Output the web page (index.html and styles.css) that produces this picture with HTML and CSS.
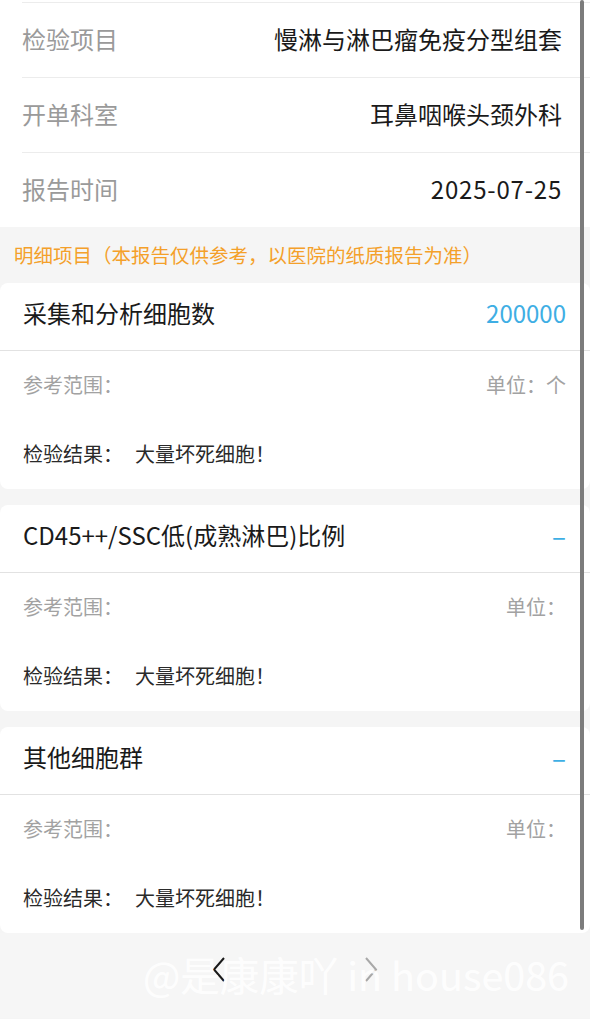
FILE: index.html
```html
<!DOCTYPE html>
<html lang="zh-CN">
<head>
<meta charset="utf-8">
<title>检验报告</title>
<link rel="stylesheet" href="styles.css">
</head>
<body>
<div class="page">
  <section class="info">
    <div class="info-row"><span class="info-label">检验项目</span><span class="info-value">慢淋与淋巴瘤免疫分型组套</span></div>
    <div class="info-row"><span class="info-label">开单科室</span><span class="info-value">耳鼻咽喉头颈外科</span></div>
    <div class="info-row"><span class="info-label">报告时间</span><span class="info-value date">2025-07-25</span></div>
  </section>
  <div class="notice">明细项目（本报告仅供参考，以医院的纸质报告为准）</div>
  <div class="cards">
    <div class="card">
      <div class="card-head"><span class="card-title">采集和分析细胞数</span><span class="card-num">200000</span></div>
      <div class="card-row muted"><span>参考范围：</span><span>单位：个</span></div>
      <div class="card-row"><span>检验结果：<span class="result">大量坏死细胞！</span></span></div>
    </div>
    <div class="card">
      <div class="card-head"><span class="card-title">CD45++/SSC低(成熟淋巴)比例</span><span class="card-num dash">–</span></div>
      <div class="card-row muted"><span>参考范围：</span><span>单位：</span></div>
      <div class="card-row"><span>检验结果：<span class="result">大量坏死细胞！</span></span></div>
    </div>
    <div class="card">
      <div class="card-head"><span class="card-title">其他细胞群</span><span class="card-num dash">–</span></div>
      <div class="card-row muted"><span>参考范围：</span><span>单位：</span></div>
      <div class="card-row"><span>检验结果：<span class="result">大量坏死细胞！</span></span></div>
    </div>
  </div>
  <footer class="footer">
    <svg class="chev" width="16" height="28" viewBox="0 0 16 28"><path d="M13 2 L3 13.5 L13 25" fill="none" stroke="#1a1a1a" stroke-width="2"/></svg>
    <svg class="chev" width="16" height="28" viewBox="0 0 16 28"><path d="M3 2 L13 13.5 L3 25" fill="none" stroke="#a8a8a8" stroke-width="2"/></svg>
  </footer>
  <div class="watermark">@是康康吖 in house086</div>
  <div class="scrollbar"></div>
</div>
</body>
</html>
```
FILE: styles.css
```css
* { box-sizing: border-box; }
html, body { margin: 0; padding: 0; }
body {
  width: 590px;
  height: 1019px;
  overflow: hidden;
  background: #f5f5f5;
  font-family: "Noto Sans CJK SC", "Noto Sans", sans-serif;
}
.page { position: relative; width: 590px; height: 1019px; }

.info {
  background: #fff;
  padding: 2px 0 0 22px;
}
.info-row {
  height: 75px;
  border-top: 1px solid #ececec;
  display: flex;
  align-items: center;
  justify-content: space-between;
  padding: 0 28px 3px 0;
  font-size: 24px;
}
.info-label { color: #9a9a9a; }
.info-value { color: #1a1a1a; }
.date { letter-spacing: 0.8px; }

.notice {
  height: 56px;
  display: flex;
  align-items: center;
  padding: 0 0 2px 14px;
  font-size: 19.5px;
  color: #f4a02a;
  background: #f5f5f5;
}

.cards {
  display: flex;
  flex-direction: column;
  gap: 16px;
}
.card {
  background: #fff;
  border-radius: 8px;
}
.card-head {
  height: 68px;
  border-bottom: 1px solid #e2e2e2;
  display: flex;
  align-items: center;
  justify-content: space-between;
  padding: 0 24px 9px 23px;
}
.card-title { font-size: 24px; color: #1a1a1a; }
.card-num { font-size: 24px; color: #3eaee4; }
.card-num.dash { font-size: 26px; }
.card-row {
  height: 69px;
  display: flex;
  align-items: center;
  justify-content: space-between;
  padding: 0 24px 2px 23px;
  font-size: 20px;
  color: #2a2a2a;
}
.card-row.muted { color: #a2a2a2; }
.result { margin-left: 12px; }

.footer {
  height: 85px;
  display: flex;
  justify-content: center;
  align-items: flex-start;
  gap: 136px;
  padding-top: 23px;
  background: #f6f6f6;
}
.chev { display: block; }

.watermark {
  position: absolute;
  left: 143px;
  top: 948px;
  font-size: 39.5px;
  line-height: 52px;
  color: rgba(255, 255, 255, 0.9);
  white-space: nowrap;
}
.scrollbar {
  position: absolute;
  left: 580px;
  top: 0;
  width: 4px;
  height: 930px;
  border-radius: 2px;
  background: #7c7c7c;
}
```
